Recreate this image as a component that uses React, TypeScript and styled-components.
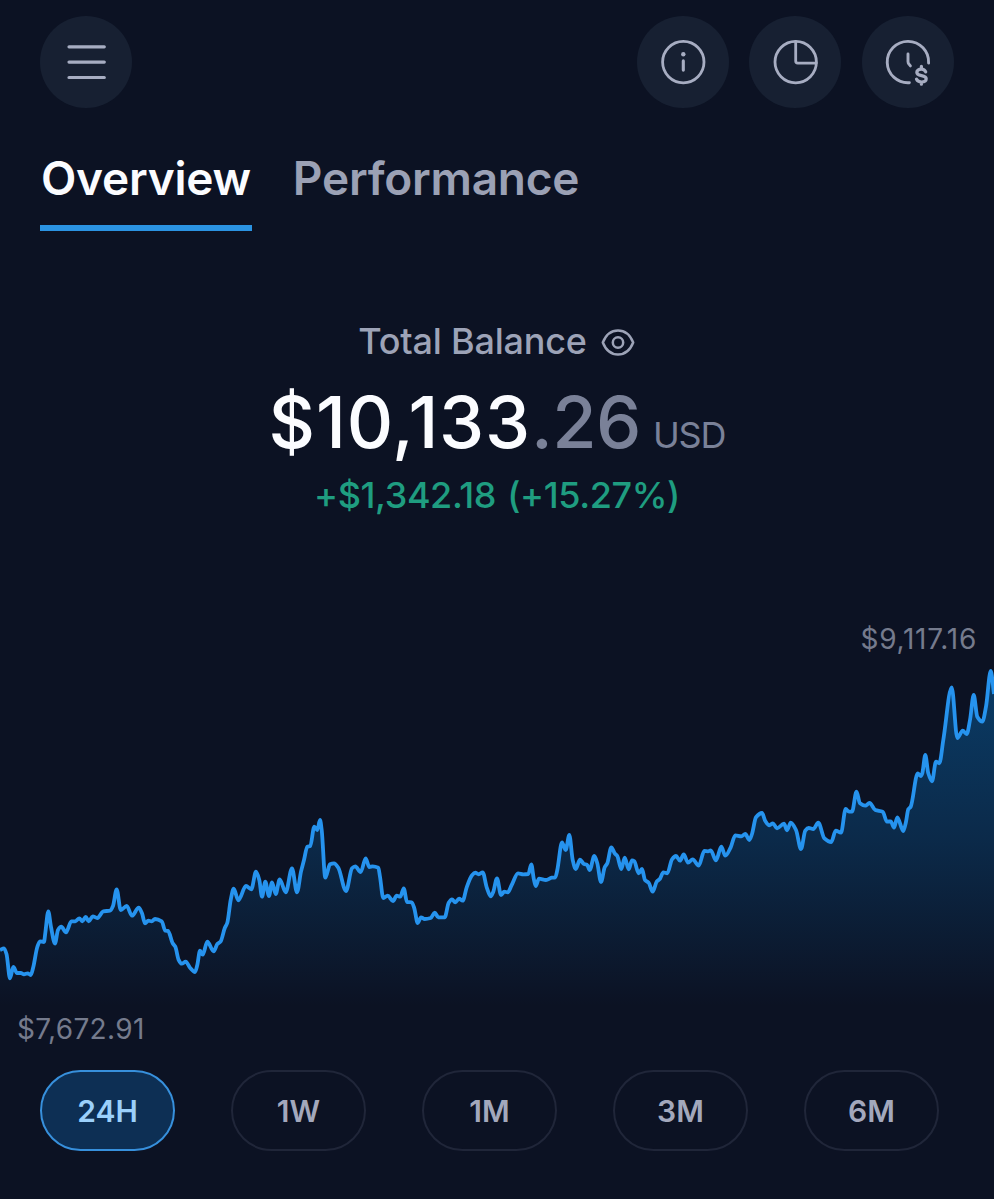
import React from "react";
import styled, { createGlobalStyle } from "styled-components";

const GlobalStyle = createGlobalStyle`
  *, *::before, *::after { box-sizing: border-box; }
  html, body { margin: 0; background: #0c1223; }
  body { font-family: Inter, "Liberation Sans", sans-serif; }
`;

const Screen = styled.main`
  width: 994px;
  height: 1199px;
  display: flex;
  flex-direction: column;
  background: #0c1223;
  overflow: hidden;
`;

const Header = styled.header`
  display: flex;
  justify-content: space-between;
  padding: 16px 40.5px 0 40px;
`;

const Actions = styled.div`
  display: flex;
  gap: 20.5px;
`;

const IconButton = styled.button`
  width: 92px;
  height: 92px;
  padding: 0;
  border: 0;
  border-radius: 50%;
  background: #172032;
  color: #a7adc2;
  display: grid;
  place-items: center;
`;

const Tabs = styled.nav`
  display: flex;
  gap: 40px;
  padding: 0 40px;
  margin-top: 40px;
`;

const Tab = styled.button<{ $active?: boolean }>`
  height: 83px;
  padding: 2px 1px 19px;
  border: 0;
  border-bottom: 6px solid ${(p) => (p.$active ? "#2b93e2" : "transparent")};
  background: none;
  color: ${(p) => (p.$active ? "#fbfcff" : "#9ba1b5")};
  font: 600 46px/56px Inter, sans-serif;
  letter-spacing: -0.25px;
  white-space: nowrap;
`;

const Summary = styled.section`
  display: flex;
  flex-direction: column;
  align-items: center;
  margin-top: 85.5px;
`;

const Label = styled.div`
  display: flex;
  align-items: center;
  gap: 14px;
  height: 48px;
  padding-right: 1px;
  color: #9da3b7;
  font-size: 36px;
  font-weight: 500;
  line-height: 48px;
  letter-spacing: -0.2px;
`;

const Balance = styled.div`
  height: 88px;
  margin-top: 13px;
  color: #fbfcff;
  font-size: 72px;
  font-weight: 500;
  line-height: 88px;
  letter-spacing: 0.85px;
  white-space: nowrap;
`;

const Cents = styled.span`
  color: #7a8198;
  letter-spacing: -0.6px;
`;

const Currency = styled.span`
  margin-left: 12px;
  color: #7a8198;
  font-size: 36px;
  font-weight: 400;
  letter-spacing: -1.1px;
`;

const Change = styled.div`
  height: 44px;
  margin-top: 7px;
  color: #1f9d80;
  font-size: 36px;
  font-weight: 500;
  line-height: 44px;
  letter-spacing: -0.4px;
  word-spacing: 2px;
  white-space: nowrap;
`;

const ChartSection = styled.section`
  display: flex;
  flex-direction: column;
  margin-top: 105px;
`;

const PriceLabel = styled.span<{ $end?: boolean }>`
  align-self: ${(p) => (p.$end ? "flex-end" : "flex-start")};
  height: 34px;
  padding: 0 17px;
  color: #757b8d;
  font-size: 28px;
  line-height: 34px;
  letter-spacing: ${(p) => (p.$end ? 0.75 : 0.35)}px;
`;

const ChartSvg = styled.svg`
  display: block;
  margin: 4px 0 2px;
`;

const Ranges = styled.div`
  display: flex;
  gap: 56px;
  padding: 0 40px;
  margin-top: 24px;
`;

const RangeButton = styled.button<{ $active?: boolean }>`
  width: 135px;
  height: 81px;
  padding: 1px 0 0;
  border: 2px solid ${(p) => (p.$active ? "#3790dc" : "#202639")};
  border-radius: 41px;
  background: ${(p) => (p.$active ? "#0d2f54" : "transparent")};
  color: ${(p) => (p.$active ? "#9bd0fa" : "#a3a8bc")};
  font: 600 30px/36px Inter, sans-serif;
`;

const series: [number, number][] = [
  [0, 950], [4, 948.3], [6.5, 954], [10, 978.3], [13.3, 967], [17, 973], [20.7, 973], [24, 974.3], [27.7, 973.3], [30.7, 975], [33.3, 967], [37.3, 947], [40, 941.3], [44, 942], [45.3, 933], [48.3, 911.3], [51, 927], [55, 943.5], [58, 930], [61.3, 926.7], [66, 932.3], [71.3, 921.3], [75.3, 921.3], [79.3, 918.3], [82.3, 921.3], [85.7, 917], [88.7, 921.3], [92.7, 916.3], [97.3, 918], [103.3, 911.3], [110, 910.7], [113, 906], [116.7, 889.3], [120.7, 910], [126.7, 906], [132, 915.7], [138.7, 907.7], [142, 913.3], [145, 923.3], [148.3, 920.7], [151.7, 921.3], [155, 919], [161.7, 921.3], [165.3, 930.7], [168, 930.9], [172.7, 943.3], [175.3, 946.7], [178.7, 960], [181.7, 963.7], [185.7, 961.7], [190, 967.7], [195, 972], [197.3, 965], [200, 950.7], [202.7, 954.7], [207.3, 941.7], [213.7, 951.3], [217.3, 944], [220.7, 941.3],
  [224.7, 928.3], [227.3, 922.7], [230.7, 900], [233.7, 888.7], [238.3, 900.3], [246, 886], [251.3, 889.3], [256, 871.7], [259.3, 880], [262, 896.7], [265.3, 881.7], [269, 896], [272, 882.3], [275.7, 894], [279.7, 879.3], [285.7, 892.3], [292, 868.3], [297, 892.3], [301, 871.7], [304, 860], [307.3, 846.7], [310.3, 846], [314.3, 826.7], [317.3, 830], [320, 820], [321.7, 830], [325.3, 877.7], [330, 864.3], [334, 863.3], [338.3, 867.7], [346, 891], [352, 868.3], [355.3, 866.3], [360.7, 872], [365.7, 858.3], [369.3, 867], [372.7, 866.3], [378.3, 867.7], [380, 876.7], [383.3, 898], [387.7, 895.7], [393, 901], [396.7, 895.7], [400.3, 896.7], [403.7, 888.3], [407, 902], [411.7, 902.3], [414.3, 908.3], [417.7, 923], [421, 917.3], [424.7, 919], [430.7, 918], [434.7, 912.7], [438.3, 917.3], [444.7, 917.3],
  [448.7, 902.7], [452, 899.3], [455.3, 902.3], [459, 898.7], [462.7, 900.7], [466.7, 887.3], [472, 875.3], [475.3, 872.7], [478.7, 874.3], [482.7, 872.3], [486.7, 887.3], [490.7, 896.3], [493.3, 891.7], [497, 878.3], [501, 895], [504.3, 891.7], [507.7, 892.3], [511.7, 885], [518, 873.3], [523.3, 874.3], [528.3, 874], [531.3, 864.3], [533.7, 878.3], [535.7, 886], [539, 878.7], [546, 880], [551.7, 877.7], [555.3, 877.3], [557.3, 870], [562, 842.3], [565.7, 850], [569.3, 835], [572.7, 860], [575.7, 869], [580, 859.7], [584, 864], [587, 864.7], [589.7, 870], [594.3, 856], [597.3, 863.3], [601, 882], [604.7, 867.3], [607.3, 863.3], [611.3, 847.3], [614.7, 853.3], [617.3, 856], [621.3, 869], [624.7, 857.7], [628.7, 869.3], [632, 860.3], [634.3, 861.3], [638.7, 873.3], [642, 869], [645, 880], [648.7, 882.7], [652.7, 891.7], [656.7, 881.7], [660, 878.7],
  [663.3, 872.3], [667.3, 873.3], [672, 859.3], [676, 856], [680, 860.7], [683.7, 854.3], [688, 862.7], [692.7, 859.3], [698.7, 865.7], [704.3, 851], [708, 851.3], [710.7, 850.3], [716, 860.3], [721.3, 846.7], [725.3, 855.7], [730.7, 847.3], [735.3, 835.3], [741.3, 836.3], [745.3, 834], [749.3, 840], [752, 834], [756, 817.3], [762, 813], [765.3, 821], [769.3, 825.3], [773, 823.3], [777, 828.3], [784, 823.7], [787, 830.3], [790.7, 822.7], [796, 830], [801, 849], [805.3, 830.7], [808.7, 828], [813.3, 829], [818.3, 822.7], [824.3, 838.3], [831.3, 842], [835.7, 830.7], [841, 832.7], [845.7, 809], [849, 811.7], [852, 811.7],
  [856.5, 791.7], [860, 803.3], [865.3, 805.7], [869.5, 803], [875.3, 810], [882.7, 811.7], [887, 821.7], [890.7, 821.3], [894, 827.7], [897.3, 817.3], [903.3, 831], [906, 821.7], [908.3, 809.3], [910.7, 806.7], [917.7, 773.3], [920.7, 776], [922.3, 773.3], [925.3, 755], [928.3, 773.3], [932, 781.3], [936, 761.7], [939.3, 763.3], [943.3, 740], [951.7, 687.3], [957.3, 738], [962.7, 730.7], [966.7, 734], [970, 720], [973.7, 695], [977.3, 716.7], [982.3, 721.7], [986, 706.7], [990.7, 671], [994, 694],
];

const CHART_TOP = 660;

/* Cubic path through the points whose tangents go flat at every local peak and dip. */
function smoothPath(points: [number, number][]) {
  const slopes = points.slice(1).map((p, i) => (p[1] - points[i][1]) / (p[0] - points[i][0]));
  const tangents = points.map((_, i) => {
    if (i === 0) return slopes[0];
    if (i === points.length - 1) return slopes[i - 1];
    const a = slopes[i - 1];
    const b = slopes[i];
    return a * b <= 0 ? 0 : (2 * a * b) / (a + b);
  });
  let d = `M${points[0][0]},${points[0][1] - CHART_TOP}`;
  for (let i = 1; i < points.length; i++) {
    const [x0, y0] = points[i - 1];
    const [x1, y1] = points[i];
    const h = (x1 - x0) / 3;
    d += `C${(x0 + h).toFixed(2)},${(y0 + h * tangents[i - 1] - CHART_TOP).toFixed(2)} ${(x1 - h).toFixed(2)},${(y1 - h * tangents[i] - CHART_TOP).toFixed(2)} ${x1},${(y1 - CHART_TOP).toFixed(2)}`;
  }
  return d;
}

const linePath = smoothPath(series);

const strokeProps = {
  fill: "none",
  stroke: "currentColor",
  strokeLinecap: "round" as const,
  strokeLinejoin: "round" as const,
};

const MenuIcon = () => (
  <svg width="40" height="40" viewBox="0 0 40 40" {...strokeProps} strokeWidth="3.2">
    <path d="M3 4.8h35.3M3 20.1h35.3M3 35.5h35.3" />
  </svg>
);

const InfoIcon = () => (
  <svg width="48" height="48" viewBox="0 0 48 48" {...strokeProps} strokeWidth="2.8">
    <circle cx="24.3" cy="24.1" r="20.7" />
    <path d="M24.3 22.9v9.2" strokeWidth="3.1" />
    <circle cx="24.3" cy="16.3" r="2.2" fill="currentColor" stroke="none" />
  </svg>
);

const PieIcon = () => (
  <svg width="48" height="48" viewBox="0 0 48 48" {...strokeProps} strokeWidth="2.8">
    <circle cx="24.7" cy="24.1" r="20.7" />
    <path d="M24.7 3.6v19.5q0 2 2 2h18.5" />
  </svg>
);

const ClockDollarIcon = () => (
  <svg width="48" height="48" viewBox="0 0 48 48" {...strokeProps} strokeWidth="2.9">
    <path d="M44.6 25.1A20.7 20.7 0 1 0 25.4 44.7" />
    <path d="M24 15.9v7.6q0 1.6 1 2.7l1.4 1.7" />
    <path d="M41.7 33.9c-.7-1.8-2.3-2.8-4.4-2.8-2.6 0-4.5 1.3-4.5 3.2 0 5 9.4 1.5 9.4 6.5 0 2-2 3.2-4.7 3.2-2.3 0-4.2-.9-5-2.8M37.4 28.3v2.8M37.4 44v2.2" strokeWidth="3.2" />
  </svg>
);

const EyeIcon = () => (
  <svg width="34" height="32" viewBox="0 0 34 32" {...strokeProps} strokeWidth="2.5">
    <path d="M1.8 17.5C5 9.5 10.5 5.5 17 5.5s12 4 15.2 12C29 25.5 23.5 29.5 17 29.5S5 25.5 1.8 17.5z" />
    <circle cx="17" cy="17.5" r="5.2" />
  </svg>
);

const ranges = ["24H", "1W", "1M", "3M", "6M"];

export default function App() {
  return (
    <Screen>
      <GlobalStyle />
      <Header>
        <IconButton aria-label="Menu"><MenuIcon /></IconButton>
        <Actions>
          <IconButton aria-label="Information"><InfoIcon /></IconButton>
          <IconButton aria-label="Allocation"><PieIcon /></IconButton>
          <IconButton aria-label="Transaction history"><ClockDollarIcon /></IconButton>
        </Actions>
      </Header>
      <Tabs>
        <Tab $active>Overview</Tab>
        <Tab>Performance</Tab>
      </Tabs>
      <Summary>
        <Label>Total Balance <EyeIcon /></Label>
        <Balance>$10,133<Cents>.26</Cents><Currency>USD</Currency></Balance>
        <Change>+$1,342.18 (+15.27%)</Change>
      </Summary>
      <ChartSection>
        <PriceLabel $end>$9,117.16</PriceLabel>
        <ChartSvg width="994" height="350" viewBox="0 0 994 350">
          <defs>
            <linearGradient id="area" gradientUnits="userSpaceOnUse" x1="0" y1="10" x2="0" y2="346">
              <stop offset="0" stopColor="#0876c4" stopOpacity="0.42" />
              <stop offset="0.5" stopColor="#0876c4" stopOpacity="0.24" />
              <stop offset="1" stopColor="#0876c4" stopOpacity="0" />
            </linearGradient>
          </defs>
          <path d={`${linePath}V350H0Z`} fill="url(#area)" />
          <path d={linePath} fill="none" stroke="#2693ee" strokeWidth="3.8" strokeLinejoin="round" />
        </ChartSvg>
        <PriceLabel>$7,672.91</PriceLabel>
      </ChartSection>
      <Ranges>
        {ranges.map((label, i) => (
          <RangeButton key={label} $active={i === 0}>{label}</RangeButton>
        ))}
      </Ranges>
    </Screen>
  );
}
